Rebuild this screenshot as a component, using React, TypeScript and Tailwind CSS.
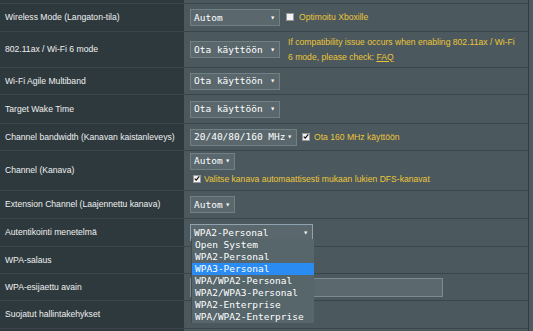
import React from 'react';

const sans = "font-['Liberation_Sans',Arial,sans-serif]";
const mono = "font-['DejaVu_Sans_Mono',monospace]";

function Select({ value, width, open }: { value: string; width: string; open?: boolean }) {
  return (
    <div
      className={`${width} ${mono} h-[17px] flex items-center justify-between pl-[3px] pr-[4px] text-[9.5px] leading-none text-white bg-[#5a686d] border ${
        open ? 'border-[#8fa2b2]' : 'border-[#718085]'
      }`}
    >
      <span>{value}</span>
      <span className="text-[8px]">▾</span>
    </div>
  );
}

function Check({ checked }: { checked?: boolean }) {
  return (
    <div className="w-[8px] h-[8px] bg-[#f2f2f2] border border-[#9a9a9a] flex items-center justify-center shrink-0">
      {checked && (
        <svg viewBox="0 0 8 8" className="w-[7px] h-[7px]">
          <path d="M1 4.2 L3 6.2 L7 1.2" fill="none" stroke="#111" strokeWidth="1.6" />
        </svg>
      )}
    </div>
  );
}

function Row({ label, h, children }: { label?: string; h: string; children?: React.ReactNode }) {
  return (
    <div className={`flex ${h} border-b border-[#3a4549]`}>
      <div className={`w-[184px] shrink-0 bg-[#2e393d] flex items-center pl-[5px] text-[8.6px] text-[#eef0f0] ${sans}`}>
        {label}
      </div>
      <div className="flex-1 flex items-center pl-[6px]">{children}</div>
    </div>
  );
}

const hint = `${sans} text-[8.6px] text-[#ecc63a]`;

export default function App() {
  const options = [
    'Open System',
    'WPA2-Personal',
    'WPA3-Personal',
    'WPA/WPA2-Personal',
    'WPA2/WPA3-Personal',
    'WPA2-Enterprise',
    'WPA/WPA2-Enterprise',
  ];
  return (
    <div className="w-[533px] h-[331px] overflow-hidden bg-[#4d5a5f] relative">
      <div className="w-[529px] border-r border-[#323c40] bg-[#4b585d]">
        <Row h="h-[4px]" />
        <Row label="Wireless Mode (Langaton-tila)" h="h-[28px]">
          <Select value="Autom" width="w-[90px]" />
          <div className="ml-[6px] flex items-center gap-[5px]">
            <Check />
            <span className={hint}>Optimoitu Xboxille</span>
          </div>
        </Row>
        <Row label="802.11ax / Wi-Fi 6 mode" h="h-[36px]">
          <Select value="Ota käyttöön" width="w-[90px]" />
          <div className={`${hint} ml-[8px] leading-[15px]`}>
            If compatibility issue occurs when enabling 802.11ax / Wi-Fi
            <br />
            6 mode, please check: <span className="underline">FAQ</span>
          </div>
        </Row>
        <Row label="Wi-Fi Agile Multiband" h="h-[27px]">
          <Select value="Ota käyttöön" width="w-[90px]" />
        </Row>
        <Row label="Target Wake Time" h="h-[29px]">
          <Select value="Ota käyttöön" width="w-[90px]" />
        </Row>
        <Row label="Channel bandwidth (Kanavan kaistanleveys)" h="h-[27px]">
          <Select value="20/40/80/160 MHz" width="w-[107px]" />
          <div className="ml-[5px] flex items-center gap-[4px]">
            <Check checked />
            <span className={hint}>Ota 160 MHz käyttöön</span>
          </div>
        </Row>
        <Row label="Channel (Kanava)" h="h-[40px]">
          <div className="flex flex-col gap-[3px] pb-[3px]">
            <Select value="Autom" width="w-[45px]" />
            <div className="flex items-center gap-[3px] pl-[3px]">
              <Check checked />
              <span className={hint}>Valitse kanava automaattisesti mukaan lukien DFS-kanavat</span>
            </div>
          </div>
        </Row>
        <Row label="Extension Channel (Laajennettu kanava)" h="h-[28px]">
          <Select value="Autom" width="w-[45px]" />
        </Row>
        <Row label="Autentikointi menetelmä" h="h-[28px]">
          <Select value="WPA2-Personal" width="w-[123px]" open />
        </Row>
        <Row label="WPA-salaus" h="h-[27px]" />
        <Row label="WPA-esijaettu avain" h="h-[27px]">
          <div className="w-[253px] h-[19px] bg-[#5b696e] border border-[#7d8a8f]" />
        </Row>
        <Row label="Suojatut hallintakehykset" h="h-[28px]" />
        <Row h="h-[10px]" />
      </div>

      <div className={`absolute left-[191px] top-[239px] w-[123px] bg-[#56666b] border-l border-[#3d4b50] ${mono} text-[9.5px] text-white`}>
        {options.map((o) => (
          <div
            key={o}
            className={`h-[12px] leading-[12px] pl-[3px] ${o === 'WPA3-Personal' ? 'bg-[#2a8bf2]' : ''}`}
          >
            {o}
          </div>
        ))}
      </div>
    </div>
  );
}
